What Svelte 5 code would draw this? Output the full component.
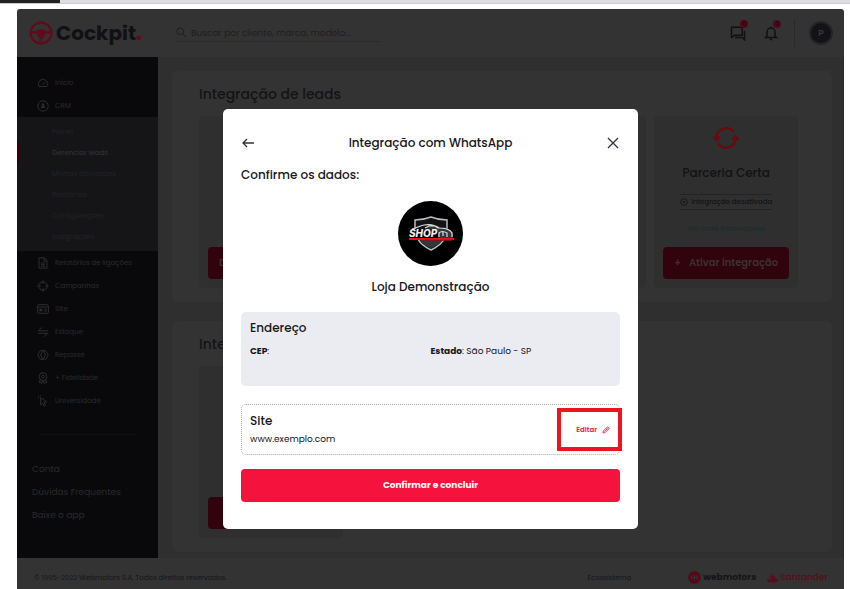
<script>
  const mainMenu = [
    { label: 'Início', icon: 'gauge' },
    { label: 'CRM', icon: 'user' }
  ];
  const crmMenu = ['Painel', 'Gerenciar leads', 'Minhas atividades', 'Relatórios', 'Configurações', 'Integrações'];
  const moreMenu = [
    { label: 'Relatórios de ligações', icon: 'file' },
    { label: 'Campanhas', icon: 'target' },
    { label: 'Site', icon: 'site' },
    { label: 'Estoque', icon: 'swap' },
    { label: 'Repasse', icon: 'rings' },
    { label: '+ Fidelidade', icon: 'medal' },
    { label: 'Universidade', icon: 'pointer' }
  ];
  const helpMenu = ['Conta', 'Dúvidas Frequentes', 'Baixe o app'];
  let active = $state('Gerenciar leads');
  let search = $state('');
</script>

{#snippet icon(name)}
  <svg class="menu-icon" viewBox="0 0 12 12" aria-hidden="true">
    {#if name === 'gauge'}
      <path d="M2.2 9.5A4.6 4.6 0 1 1 9.8 9.5Z M5.5 7.8L8 5.2" />
    {:else if name === 'user'}
      <circle cx="6" cy="6" r="5.2" />
      <path class="solid" d="M6 3.2a1.3 1.3 0 0 1 .8 2.3L8.4 8H3.6l1.6-2.5A1.3 1.3 0 0 1 6 3.2Z" />
    {:else if name === 'file'}
      <path d="M2 .8h5.2L10 3.5v7.7H2ZM7 1v3h3M4 6h4M4 7.7h4M4 9.3h4" />
    {:else if name === 'target'}
      <circle cx="6" cy="6" r="4.2" />
      <path d="M6 .4v3.4M6 8.2v3.4M.4 6h3.4M8.2 6h3.4" />
    {:else if name === 'site'}
      <rect x=".6" y="1.7" width="10.8" height="8.6" rx="1" />
      <path d="M1 4h10M7.3 6.3h2.4M7.3 8h2.4" />
      <path class="solid" d="M2.3 5.7h3v2.7h-3Z" />
    {:else if name === 'swap'}
      <path d="M11 4.8H1.5L5.3 1.3M1 7.3h9.7L6.8 10.8" />
    {:else if name === 'rings'}
      <path d="M4.2 1.7h2L8.4 6 6.2 10.3h-3L.8 6l2.4-4.3ZM7.8 10.3h-2L3.6 6l2.2-4.3h3L11.2 6l-2.4 4.3Z" />
    {:else if name === 'medal'}
      <circle cx="6" cy="4.6" r="3.9" />
      <circle cx="6" cy="4.6" r="1.4" />
      <path d="M3.4 7.6L2 10.4l1.6-.2.9 1.4L6 8.6l1.5 3 .9-1.4 1.6.2-1.4-2.8" />
    {:else}
      <path d="M3.6 2.8l6.2 4-2.7.7 1.5 3-1.5.7-1.5-3-2 1.7ZM1.2 1l1 1M3.5.4v1M.8 3.2h1" />
    {/if}
  </svg>
{/snippet}

<div class="strip"><span></span></div>

<div class="page">
  <div class="app">
    <header class="topbar">
      <a class="brand" href="#inicio">
        <svg viewBox="0 0 24 24" aria-hidden="true">
          <circle cx="12" cy="12" r="10.4" fill="none" stroke="#620a1b" stroke-width="2.2" />
          <path d="M2 10.2h5.500l1-1.700h7l1 1.700H22v2.200h-5.500L15 16l-1.500 1v5h-1v-4h-1v4h-1v-5L9 16l-1.500-3.600H2Z" fill="#620a1b" />
        </svg>
        <span>Cockpit<b>.</b></span>
      </a>
      <label class="search">
        <svg viewBox="0 0 12 12" aria-hidden="true"><circle cx="4.6" cy="4.6" r="3.7" /><path d="M7.4 7.4l4 4" /></svg>
        <input type="text" aria-label="Buscar" placeholder="Buscar por cliente, marca, modelo..." bind:value={search} />
      </label>
      <div class="actions">
        <button class="notice" aria-label="Mensagens">
          <svg viewBox="0 0 16 16" aria-hidden="true"><path d="M1.5 13V2.300h10.700v8H4.300L1.500 13M5 12.500h7l2.500 2.200V6" /></svg>
          <i>0</i>
        </button>
        <button class="notice" aria-label="Notificações">
          <svg viewBox="0 0 16 16" aria-hidden="true"><path d="M2.500 12.600h11L12 10.800V7a4 4 0 0 0-8 0v3.800ZM8 3V1.500M6.700 14.500h2.600" /></svg>
          <i>0</i>
        </button>
        <span class="rule"></span>
        <button class="avatar">P</button>
      </div>
    </header>

    <div class="body">
      <nav class="sidebar">
        {#each mainMenu as item}
          <a class="item" href="#menu">{@render icon(item.icon)}{item.label}</a>
        {/each}
        <div class="submenu">
          {#each crmMenu as label}
            <a href="#crm" class:active={label === active} onclick={() => (active = label)}>{label}</a>
          {/each}
        </div>
        {#each moreMenu as item}
          <a class="item" href="#menu">{@render icon(item.icon)}{item.label}</a>
        {/each}
        <hr />
        {#each helpMenu as label}
          <a class="help" href="#ajuda">{label}</a>
        {/each}
      </nav>

      <main>
        <section class="panel">
          <h2>Integração de leads</h2>
          <div class="cards">
            <article class="card"><button class="cta wide">Desativar integração</button></article>
            <article class="card"></article>
            <article class="card"></article>
            <article class="card">
              <svg class="sync" viewBox="0 0 28 24" aria-hidden="true">
                <path d="M4.500 12a9.500 9.500 0 0 1 17-6M23.500 12a9.500 9.500 0 0 1-17 6" fill="none" stroke="#650d0d" stroke-width="2.600" />
                <path d="M0 10.500h9.400l-4.700 5.800ZM18.600 13.700H28l-4.700-5.800Z" fill="#650d0d" />
              </svg>
              <h3>Parceria Certa</h3>
              <p class="status">
                <svg viewBox="0 0 10 10" aria-hidden="true"><circle cx="5" cy="5" r="4.200" /><path d="M3.500 3.500l3 3M6.500 3.500l-3 3" /></svg>
                Integração desativada
              </p>
              <a class="more" href="#info">Ver mais informações</a>
              <button class="cta"><span>+</span>Ativar integração</button>
            </article>
          </div>
        </section>
        <section class="panel">
          <h2>Integrações</h2>
          <div class="cards">
            <article class="card"><button class="cta"></button></article>
          </div>
        </section>
      </main>
    </div>

    <footer>
      <span>© 1995-2022 Webmotors S.A. Todos direitos reservados.</span>
      <div class="partners">
        <span>Ecossistema</span>
        <a class="webmotors" href="#webmotors">
          <svg viewBox="0 0 14 14" aria-hidden="true"><circle cx="7" cy="7" r="6.800" fill="#560718" /><path d="M4 4.500v5M7 4v6M10 4.500v5M4 7h6" stroke="#333" stroke-width="1.100" /></svg>
          webmotors
        </a>
        <a class="santander" href="#santander">
          <svg viewBox="0 0 12 12" aria-hidden="true"><path d="M5.600.5c-.8 2 2.400 3.200 1.700 6C8.200 6 8.500 5 8 4c1 1.200 1 2.200.7 3C10.600 7.400 12 8 12 9c0 1.500-2.700 2.500-6 2.500S0 10.500 0 9c0-1 1.200-1.700 3-2 .1 1 1 1.500 2 2 .5-2.600-2.300-3-1.500-5.700.5 1 1.800 1.600 2.100 2.500C6.100 4 4 2.500 5.600.5Z" fill="#5b0b19" /></svg>
          Santander
        </a>
      </div>
    </footer>

    <div class="overlay">
      <div class="modal" role="dialog" aria-modal="true" aria-labelledby="modal-title">
        <div class="modal-head">
          <button aria-label="Voltar"><svg viewBox="0 0 14 14" aria-hidden="true"><path d="M13 7H2M6 3L2 7l4 4" /></svg></button>
          <h1 id="modal-title">Integração com WhatsApp</h1>
          <button aria-label="Fechar"><svg viewBox="0 0 14 14" aria-hidden="true"><path d="M2 2l10 10M12 2L2 12" /></svg></button>
        </div>
        <p class="lead">Confirme os dados:</p>
        <div class="store">
          <svg viewBox="0 0 65 65" role="img" aria-label="Loja">
            <circle cx="32.500" cy="32.500" r="32.500" fill="#000" />
            <path d="M17 28V19c6 0 11-1 16-3 5 2 10 3 16 3v11M20 38c2 5 7 8 13 11 6-3 11-6 13-11" fill="#111314" stroke="#bbb" stroke-width="1.500" />
            <path d="M22 39h22c-1 3-6 6-11 8-5-2-10-5-11-8Z" fill="#33383b" />
            <path d="M26 27c5-3 14-3 18 0 6 0 10 2 11 5v5H40V29Z" fill="#34383a" />
            <path d="M14 28c5-1 7-3 12-4 5-1 11 0 15 3 6 0 11 1 13 5v4M27 27l4-2h6l3 2M41 36v-4q3-3 8 0v4M45 31v4" fill="none" stroke="#ddd" stroke-width="1.200" />
            <text x="11" y="36">SHOP</text>
            <path d="M11 38h45" stroke="#e21313" stroke-width="1.800" />
            <path d="M26 39.300h28" stroke="#8e1111" />
          </svg>
          <strong>Loja Demonstração</strong>
        </div>
        <section class="address">
          <h2>Endereço</h2>
          <div class="fields">
            <span><b>CEP</b>:</span>
            <span><b>Estado</b>: São Paulo - SP</span>
          </div>
        </section>
        <section class="site">
          <div>
            <h2>Site</h2>
            <p>www.exemplo.com</p>
          </div>
          <button class="edit">
            Editar
            <svg viewBox="0 0 10 10" aria-hidden="true"><path d="M1.200 8.800l.5-2.600 4.700-4.700q.8-.6 1.600.1l.5.5q.7.8.1 1.500L3.800 8.300ZM5.700 2.300l2.100 2.100M3 7L6.300 3.700" /></svg>
          </button>
          <span class="highlight"></span>
        </section>
        <button class="confirm">Confirmar e concluir</button>
      </div>
    </div>
  </div>
</div>

<style>
  :global(body) { background: #fff; }
  :global(#app) { font-family: Poppins, Inter, "Liberation Sans", sans-serif; }
  * { box-sizing: border-box; }
  h1, h2, h3, p { margin: 0; font-weight: 500; }
  a { color: inherit; text-decoration: none; }
  button { border: 0; padding: 0; background: none; color: inherit; font: inherit; white-space: nowrap; cursor: pointer; }
  svg { display: block; flex: none; }

  .strip { height: 4px; background: #dedee0; border-bottom: 1px solid #ccccd6; }
  .strip span { display: block; width: 60px; height: 3px; background: #232122; }
  .page { padding: 5px 6px 0 17px; }
  .app { position: relative; overflow: hidden; border-radius: 3px 3px 0 0; background: #333; }

  .topbar { display: flex; align-items: center; height: 48px; padding: 0 11px 0 12px; }
  .brand { display: flex; align-items: center; gap: 3px; width: 147px; color: #111114; font-size: 20px; line-height: 28px; font-weight: 700; }
  .brand svg { width: 24px; height: 24px; }
  .brand b { color: #620a1b; }
  .search { display: flex; align-items: center; gap: 4px; width: 205px; height: 18px; border-bottom: 1px solid #2c2c2c; }
  .search svg { width: 11px; height: 11px; fill: none; stroke: #1d1d1f; }
  .search input { flex: 1; min-width: 0; border: 0; padding: 0; outline: 0; background: none; color: #1c1c1e; font: 9px/14px Poppins, Inter, sans-serif; }
  .search input::placeholder { color: #1e1e20; opacity: 1; }
  .actions { display: flex; align-items: center; gap: 17px; margin-left: auto; }
  .notice { position: relative; }
  .notice svg { width: 16px; height: 16px; fill: none; stroke: #111114; stroke-width: 1.5; }
  .notice i { position: absolute; top: -5px; right: -2px; width: 8px; height: 8px; border-radius: 50%; background: #52071a; color: #250a10; font: 700 6px/8px Inter, sans-serif; }
  .rule { width: 1px; height: 28px; margin-left: -2px; background: #2a2a2b; }
  .avatar { width: 24px; height: 24px; margin-left: -3px; border: 2px solid #242426; border-radius: 50%; background: #131317; color: #38383a; font-size: 9px; font-weight: 600; }

  .body { display: flex; }
  .sidebar { flex: none; width: 141px; min-height: 501px; padding: 14px 0 31px; background: #09090b; color: #2a2a2c; font-size: 7px; white-space: nowrap; }
  .item { display: flex; align-items: center; gap: 6px; height: 23px; padding-left: 20px; }
  .menu-icon { width: 12px; height: 12px; fill: none; stroke: #2d2d2f; }
  .menu-icon .solid { fill: #2d2d2f; stroke: none; }
  .submenu { padding: 4px 0; background: #151518; color: #222225; }
  .submenu a { display: flex; align-items: center; height: 21px; padding-left: 33px; border-left: 2px solid transparent; }
  .submenu a.active { border-color: #33000b; color: #303033; font-weight: 500; }
  .sidebar hr { height: 1px; margin: 22px 22px 23px 21px; border: 0; background: #101012; }
  .help { display: flex; align-items: center; height: 23px; padding-left: 15px; font-size: 9px; }

  main { display: flex; flex: 1; flex-direction: column; gap: 19px; min-width: 0; padding: 14px 12px 6px 14px; background: #2f2f2f; }
  .panel { height: 231px; padding: 14px 34px 14px 27px; border-radius: 5px; background: #333; }
  .panel h2 { margin-bottom: 13px; color: #131315; font-size: 14px; line-height: 18px; }
  .cards { display: grid; grid-template-columns: repeat(4, 1fr); gap: 8px; }
  .card { display: flex; flex-direction: column; align-items: center; min-width: 0; height: 172px; padding: 10px 9px 9px; border-radius: 5px; background: #2f2f2f; }
  .sync { width: 28px; height: 24px; }
  .card h3 { margin-top: 13px; color: #121214; font-size: 12px; line-height: 20px; }
  .status { display: flex; align-items: center; gap: 3px; height: 16px; margin-top: 11px; border: solid #232325; border-width: 1px 0; color: #131315; font-size: 7px; white-space: nowrap; }
  .status svg { width: 8px; height: 8px; fill: none; stroke: #151517; }
  .more { margin-top: 13px; color: #172c32; font-size: 7px; line-height: 12px; white-space: nowrap; }
  .cta { width: 100%; height: 32px; flex: none; margin-top: auto; border-radius: 4px; background: #31030c; color: #3e3032; font-size: 10px; font-weight: 600; }
  .cta span { margin-right: 8px; }
  .wide { padding-left: 11px; text-align: left; }

  footer { display: flex; align-items: center; justify-content: space-between; height: 31px; padding: 8px 16px 0 17px; color: #161618; font-size: 7px; }
  .partners { display: flex; align-items: center; gap: 11px; }
  .partners span { margin-right: 46px; }
  .webmotors, .santander { display: flex; align-items: center; gap: 2px; font-size: 9px; font-weight: 700; }
  .webmotors svg { width: 13px; height: 13px; }
  .santander { color: #5b0b19; font-weight: 500; }
  .santander svg { width: 11px; height: 11px; }

  .overlay { position: absolute; inset: 0; display: flex; justify-content: center; align-items: flex-start; padding-top: 100px; }
  .modal { width: 415px; max-width: 100%; padding: 24px 18px 27px; border-radius: 5px; background: #fff; color: #17171c; }
  .modal-head { display: flex; align-items: center; justify-content: space-between; height: 20px; }
  .modal-head svg { width: 14px; height: 14px; fill: none; stroke: #33333d; stroke-width: 1.3; }
  .modal h1, .lead, .store strong, .modal h2 { font-size: 12px; line-height: 20px; font-weight: 500; }
  .lead { margin-top: 12px; }
  .store { display: flex; flex-direction: column; align-items: center; gap: 11px; margin-top: 16px; }
  .store svg { width: 65px; height: 65px; }
  .store text { fill: #eee; font: italic 800 10px Inter, sans-serif; }
  .address { min-height: 74px; margin-top: 15px; padding: 6px 9px; border-radius: 5px; background: #ebecf1; }
  .fields { display: grid; grid-template-columns: 1fr 1fr; margin-top: 5px; font-size: 9px; line-height: 16px; }
  .site { position: relative; display: flex; align-items: center; justify-content: space-between; height: 51px; margin-top: 18px; padding: 0 9px 0 8px; border: 1px dotted #a9a9b5; border-radius: 5px; }
  .site p { font-size: 9px; line-height: 17px; font-weight: 400; }
  .edit { display: flex; align-items: center; gap: 5px; color: #f3123c; font-size: 7px; font-weight: 600; }
  .edit svg { width: 8px; height: 8px; fill: none; stroke: #f3123c; }
  .highlight { position: absolute; top: 3px; right: -3px; width: 65px; height: 43px; border: 4px solid #ed1420; pointer-events: none; }
  .confirm { display: block; width: 100%; height: 33px; margin-top: 14px; border-radius: 4px; background: #f5123c; color: #fff; font-size: 9px; font-weight: 700; }
</style>
